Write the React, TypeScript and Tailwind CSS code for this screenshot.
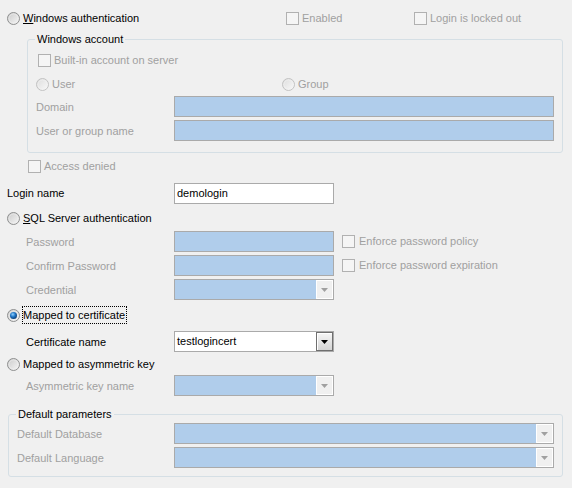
import React from "react";

function Radio({ checked = false, disabled = false }: { checked?: boolean; disabled?: boolean }) {
  const id = checked ? "rc" : disabled ? "rd" : "re";
  return (
    <svg width="13" height="13" viewBox="0 0 13 13" className="shrink-0">
      <defs>
        <linearGradient id={id + "g"} x1="0" y1="0" x2="1" y2="1">
          <stop offset="0" stopColor={disabled ? "#dcdcdc" : "#c9c9c9"} />
          <stop offset="1" stopColor={disabled ? "#fafafa" : "#f8f8f8"} />
        </linearGradient>
        <radialGradient id={id + "d"} cx="0.4" cy="0.35" r="0.7">
          <stop offset="0" stopColor="#8fd0ff" />
          <stop offset="0.5" stopColor="#1f74c4" />
          <stop offset="1" stopColor="#0b3a70" />
        </radialGradient>
      </defs>
      <circle cx="6.5" cy="6.5" r="6" fill={`url(#${id}g)`} stroke={disabled ? "#c2c2c2" : "#8e8f8f"} strokeWidth="1" />
      <circle cx="6.5" cy="6.5" r="4.5" fill="none" stroke={disabled ? "#f2f2f2" : "#eeeeee"} strokeWidth="0.8" opacity="0.7" />
      {checked && <circle cx="6.5" cy="6.5" r="3.5" fill={`url(#${id}d)`} />}
    </svg>
  );
}

function Check() {
  return <div className="w-[13px] h-[13px] shrink-0 border border-[#b1b1b1] bg-[#f5f5f5]" />;
}

function Arrow({ color }: { color: string }) {
  return (
    <svg width="7" height="4" viewBox="0 0 7 4">
      <path d="M0 0H7L3.5 4Z" fill={color} />
    </svg>
  );
}

function Input({ w, white = false, children }: { w: string; white?: boolean; children?: React.ReactNode }) {
  return (
    <div
      className={`${w} h-[21px] shrink-0 border border-[#aaaaaa] flex items-center pl-[2px] ${
        white ? "bg-white" : "bg-[#b0cdeb]"
      }`}
    >
      {children}
    </div>
  );
}

function Combo({ w, white = false, value }: { w: string; white?: boolean; value?: string }) {
  return (
    <div
      className={`${w} h-[21px] shrink-0 border border-[#aaaaaa] flex items-stretch ${
        white ? "bg-white" : "bg-[#b0cdeb]"
      }`}
    >
      <div className="flex-1 flex items-center pl-[2px]">{value}</div>
      {white ? (
        <div className="w-[17px] border border-[#6f6f6f] bg-gradient-to-b from-[#f6f6f6] to-[#d4d4d4] shadow-[inset_1px_1px_0_#ffffff] flex items-center justify-center">
          <Arrow color="#000000" />
        </div>
      ) : (
        <div className="w-[17px] border border-white bg-[#f0f0f0] flex items-center justify-center">
          <Arrow color="#a0a0a0" />
        </div>
      )}
    </div>
  );
}

const gray = "text-[#a0a0a0]";

export default function App() {
  return (
    <div className="w-[572px] h-[488px] bg-[#f0f0f0] text-[11px] leading-[13px] text-black overflow-hidden font-['Liberation_Sans',Arial,sans-serif] flex flex-col">
      {/* Row 1 */}
      <div className="flex items-center h-[20px] mt-[8px]">
        <div className="flex items-center w-[286px] pl-[7px] gap-[3px]">
          <Radio />
          <span>
            <span className="underline">W</span>indows authentication
          </span>
        </div>
        <div className="flex items-center w-[128px] gap-[3px]">
          <Check />
          <span className={gray}>Enabled</span>
        </div>
        <div className="flex items-center gap-[3px]">
          <Check />
          <span className={gray}>Login is locked out</span>
        </div>
      </div>

      {/* Windows account group */}
      <div className="relative mt-[11px] ml-[27px] w-[536px] border border-[#d5dfe5] rounded-[3px] pt-[10px] pb-[11px] flex flex-col">
        <span className="absolute left-[7px] top-[-7px] px-[2px] bg-[#f0f0f0]">Windows account</span>
        <div className="flex items-center h-[20px] pl-[10px] gap-[3px]">
          <Check />
          <span className={gray}>Built-in account on server</span>
        </div>
        <div className="flex items-center h-[20px] mt-[4px] pl-[8px]">
          <div className="flex items-center w-[246px] gap-[3px]">
            <Radio disabled />
            <span className={gray}>User</span>
          </div>
          <div className="flex items-center gap-[3px]">
            <Radio disabled />
            <span className={gray}>Group</span>
          </div>
        </div>
        <div className="flex items-center h-[21px] mt-[2px]">
          <span className={`w-[146px] pl-[8px] pt-[2px] shrink-0 ${gray}`}>Domain</span>
          <Input w="w-[380px]" />
        </div>
        <div className="flex items-center h-[21px] mt-[3px]">
          <span className={`w-[146px] pl-[8px] pt-[2px] shrink-0 ${gray}`}>User or group name</span>
          <Input w="w-[380px]" />
        </div>
      </div>

      {/* Access denied */}
      <div className="flex items-center h-[20px] mt-[3px] pl-[28px] gap-[3px]">
        <Check />
        <span className={gray}>Access denied</span>
      </div>

      {/* Login name */}
      <div className="flex items-center h-[21px] mt-[7px]">
        <span className="w-[174px] pl-[7px] shrink-0">Login name</span>
        <Input w="w-[160px]" white>
          demologin
        </Input>
      </div>

      {/* SQL Server authentication */}
      <div className="flex items-center h-[20px] mt-[4px] pl-[7px] gap-[3px]">
        <Radio />
        <span>
          <span className="underline">S</span>QL Server authentication
        </span>
      </div>

      <div className="flex items-center h-[21px] mt-[3px]">
        <span className={`w-[174px] pl-[26px] pt-[2px] shrink-0 ${gray}`}>Password</span>
        <Input w="w-[160px]" />
        <div className="flex items-center ml-[8px] gap-[4px]">
          <Check />
          <span className={gray}>Enforce password policy</span>
        </div>
      </div>
      <div className="flex items-center h-[21px] mt-[3px]">
        <span className={`w-[174px] pl-[26px] pt-[2px] shrink-0 ${gray}`}>Confirm Password</span>
        <Input w="w-[160px]" />
        <div className="flex items-center ml-[8px] gap-[4px]">
          <Check />
          <span className={gray}>Enforce password expiration</span>
        </div>
      </div>
      <div className="flex items-center h-[21px] mt-[3px]">
        <span className={`w-[174px] pl-[26px] pt-[2px] shrink-0 ${gray}`}>Credential</span>
        <Combo w="w-[160px]" />
      </div>

      {/* Mapped to certificate */}
      <div className="flex items-center h-[20px] mt-[5px] pl-[7px]">
        <Radio checked />
        <span className="ml-[2px] h-[18px] flex items-center border border-dotted border-black pr-[1px]">
          Mapped to certificate
        </span>
      </div>
      <div className="flex items-center h-[21px] mt-[6px]">
        <span className="w-[174px] pl-[26px] pt-[1px] shrink-0">Certificate name</span>
        <Combo w="w-[160px]" white value="testlogincert" />
      </div>

      {/* Mapped to asymmetric key */}
      <div className="flex items-center h-[20px] mt-[2px] pl-[7px] gap-[3px]">
        <Radio />
        <span>Mapped to asymmetric key</span>
      </div>
      <div className="flex items-center h-[21px] mt-[1px]">
        <span className={`w-[174px] pl-[26px] pt-[2px] shrink-0 ${gray}`}>Asymmetric key name</span>
        <Combo w="w-[160px]" />
      </div>

      {/* Default parameters group */}
      <div className="relative mt-[18px] ml-[8px] w-[555px] border border-[#d5dfe5] rounded-[3px] pt-[8px] pb-[8px] flex flex-col">
        <span className="absolute left-[7px] top-[-7px] px-[2px] bg-[#f0f0f0]">Default parameters</span>
        <div className="flex items-center h-[21px]">
          <span className={`w-[165px] pl-[8px] pt-[2px] shrink-0 ${gray}`}>Default Database</span>
          <Combo w="w-[380px]" />
        </div>
        <div className="flex items-center h-[21px] mt-[3px]">
          <span className={`w-[165px] pl-[8px] pt-[2px] shrink-0 ${gray}`}>Default Language</span>
          <Combo w="w-[380px]" />
        </div>
      </div>
    </div>
  );
}
